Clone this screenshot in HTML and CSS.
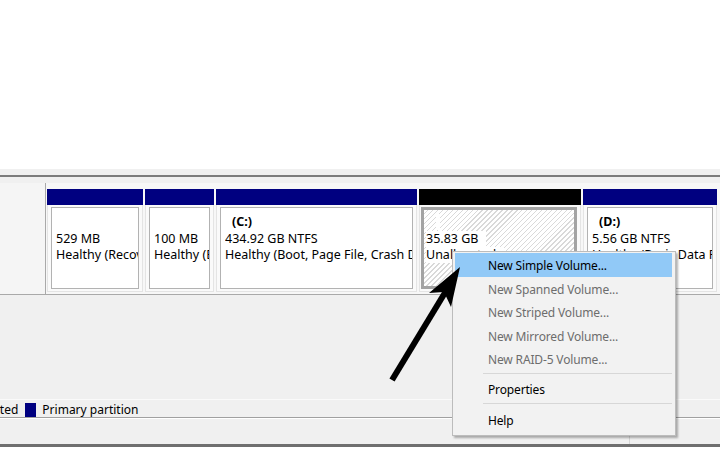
FILE: index.html
```html
<!DOCTYPE html>
<html lang="en">
<head>
  <meta charset="UTF-8" />
  <title>Disk Management - New Simple Volume</title>
  <link rel="stylesheet" href="styles.css">
</head>
<body>
  <div class="page">
    <div class="top"></div>
    <div class="splitter"></div>

    <div class="graph">
      <div class="disk-row">
        <div class="disk-label"></div>
        <div class="parts">
          <div class="part p1">
            <div class="bar"></div>
            <div class="body"><div class="box">
              <div class="ln name">&nbsp;</div>
              <div class="ln">529 MB</div>
              <div class="ln">Healthy (Recovery Partition)</div>
            </div></div>
          </div>
          <div class="part p2">
            <div class="bar"></div>
            <div class="body"><div class="box">
              <div class="ln name">&nbsp;</div>
              <div class="ln">100 MB</div>
              <div class="ln">Healthy (EFI System Partition)</div>
            </div></div>
          </div>
          <div class="part p3">
            <div class="bar"></div>
            <div class="body"><div class="box">
              <div class="ln name">(C:)</div>
              <div class="ln">434.92 GB NTFS</div>
              <div class="ln">Healthy (Boot, Page File, Crash Dump, Basic Data Partition)</div>
            </div></div>
          </div>
          <div class="part p4 free">
            <div class="bar"></div>
            <div class="body"><div class="box">
              <div class="ln name"><span>&nbsp;</span></div>
              <div class="ln"><span>35.83 GB</span></div>
              <div class="ln"><span>Unallocated</span></div>
            </div></div>
          </div>
          <div class="part p5">
            <div class="bar"></div>
            <div class="body"><div class="box">
              <div class="ln name">(D:)</div>
              <div class="ln">5.56 GB NTFS</div>
              <div class="ln">Healthy (Basic Data Partition)</div>
            </div></div>
          </div>
        </div>
      </div>

      <div class="gap"></div>

      <div class="legend">
        <span class="key black"></span><span class="key-text">Unallocated</span>
        <span class="key blue"></span><span class="key-text">Primary partition</span>
      </div>
      <div class="status"><div class="pane"></div></div>
    </div>
    <div class="bottom-bar"></div>

    <div class="menu">
      <div class="item active">New Simple Volume...</div>
      <div class="item off">New Spanned Volume...</div>
      <div class="item off">New Striped Volume...</div>
      <div class="item off">New Mirrored Volume...</div>
      <div class="item off">New RAID-5 Volume...</div>
      <div class="sep"></div>
      <div class="item tall">Properties</div>
      <div class="sep wide"></div>
      <div class="item tall">Help</div>
    </div>

    <svg class="arrow" width="720" height="450" viewBox="0 0 720 450">
      <line x1="392" y1="380" x2="446" y2="291" stroke="#000" stroke-width="6" />
      <polygon points="460,267 429,293 444,292 451,307" fill="#000" />
    </svg>
  </div>
</body>
</html>
```

FILE: styles.css
```css
body {
  margin: 0;
  background: #fff;
  font-family: "Noto Sans", "Open Sans", sans-serif;
  color: #000;
  overflow: hidden;
}
.page {
  position: relative;
  width: 720px;
  height: 450px;
  overflow: hidden;
}
.top {
  height: 169px;
  background: #fff;
}
.splitter {
  height: 6px;
  background: #f0f0f0;
  border-bottom: 2px solid #7c7c7c;
}
.graph {
  background: #f0f0f0;
  padding-top: 6px;
}
.disk-row {
  display: flex;
  height: 111px;
  background: #f7f7f7;
  border-bottom: 1px solid #a9a9a9;
}
.disk-label {
  width: 45px;
  border-right: 1px solid #a9a9a9;
  background: #f5f5f5;
}
.parts {
  display: flex;
  gap: 2px;
  padding: 6px 0 0 1px;
}
.part {
  display: flex;
  flex-direction: column;
  flex: none;
}
.p1 { width: 96px; }
.p2 { width: 69px; }
.p3 { width: 201px; }
.p4 { width: 162px; }
.p5 { width: 134px; }
.bar {
  height: 16px;
  background: #000080;
}
.free .bar {
  background: #000;
}
.body {
  padding: 2px 3px;
  background: #fafafa;
  border: 1px solid #e4e4e4;
  border-top: none;
}
.box {
  height: 82px;
  box-sizing: border-box;
  border: 1px solid #b2b2b2;
  background: #fff;
  padding: 6px 0 0 4px;
  font-size: 12.5px;
  line-height: 16.5px;
  overflow: hidden;
}
.ln {
  white-space: nowrap;
  overflow: hidden;
}
.name {
  font-weight: bold;
  padding-left: 7px;
}
.free .body {
  padding: 2px 3px 2px 1px;
}
.free .box {
  border: 3px solid #a3a3a3;
  padding: 4px 0 0 2px;
  background: repeating-linear-gradient(135deg, #fff 0, #fff 2.5px, #d9d9d9 2.5px, #d9d9d9 3.5px);
}
.free .ln span {
  background: #fff;
  padding-right: 8px;
}
.free .name span {
  margin-left: 3px;
  padding-right: 1px;
}
.gap {
  height: 104px;
}
.legend {
  display: flex;
  align-items: center;
  height: 19px;
  padding-top: 2px;
  box-sizing: border-box;
  border-top: 1px solid #fafafa;
  border-bottom: 1px solid #a0a0a0;
  box-shadow: 0 1px 0 #fff;
  margin-left: -66px;
  font-size: 12px;
}
.key {
  width: 11px;
  height: 14px;
  margin-right: 6px;
}
.key.black { background: #000; }
.key.blue { background: #000080; }
.key-text {
  margin-right: 7px;
}
.status {
  height: 26px;
  display: flex;
  justify-content: flex-end;
}
.pane {
  width: 90px;
  margin-top: 16px;
  border-left: 1px solid #d6d6d6;
}
.bottom-bar {
  height: 3px;
  background: #6f6f6f;
}
.menu {
  position: absolute;
  left: 452px;
  top: 251px;
  width: 224px;
  box-sizing: border-box;
  padding: 1px 3px 3px 2px;
  background: #f2f2f2;
  border: 1px solid #bcbcbc;
  box-shadow: 2px 2px 2px rgba(0, 0, 0, 0.3);
  font-size: 12px;
  letter-spacing: -0.15px;
}
.item {
  height: 23.6px;
  line-height: 25.5px;
  padding-left: 33px;
  white-space: nowrap;
}
.item.tall {
  height: 24px;
  line-height: 26px;
}
.item.active {
  background: #91c9f7;
}
.item.off {
  color: #6d6d6d;
}
.sep {
  height: 6px;
  margin-left: 28px;
  background: linear-gradient(#d7d7d7, #d7d7d7) no-repeat 0 2px / 100% 1px;
}
.sep.wide {
  height: 7px;
}
.arrow {
  position: absolute;
  left: 0;
  top: 0;
  pointer-events: none;
}
```
